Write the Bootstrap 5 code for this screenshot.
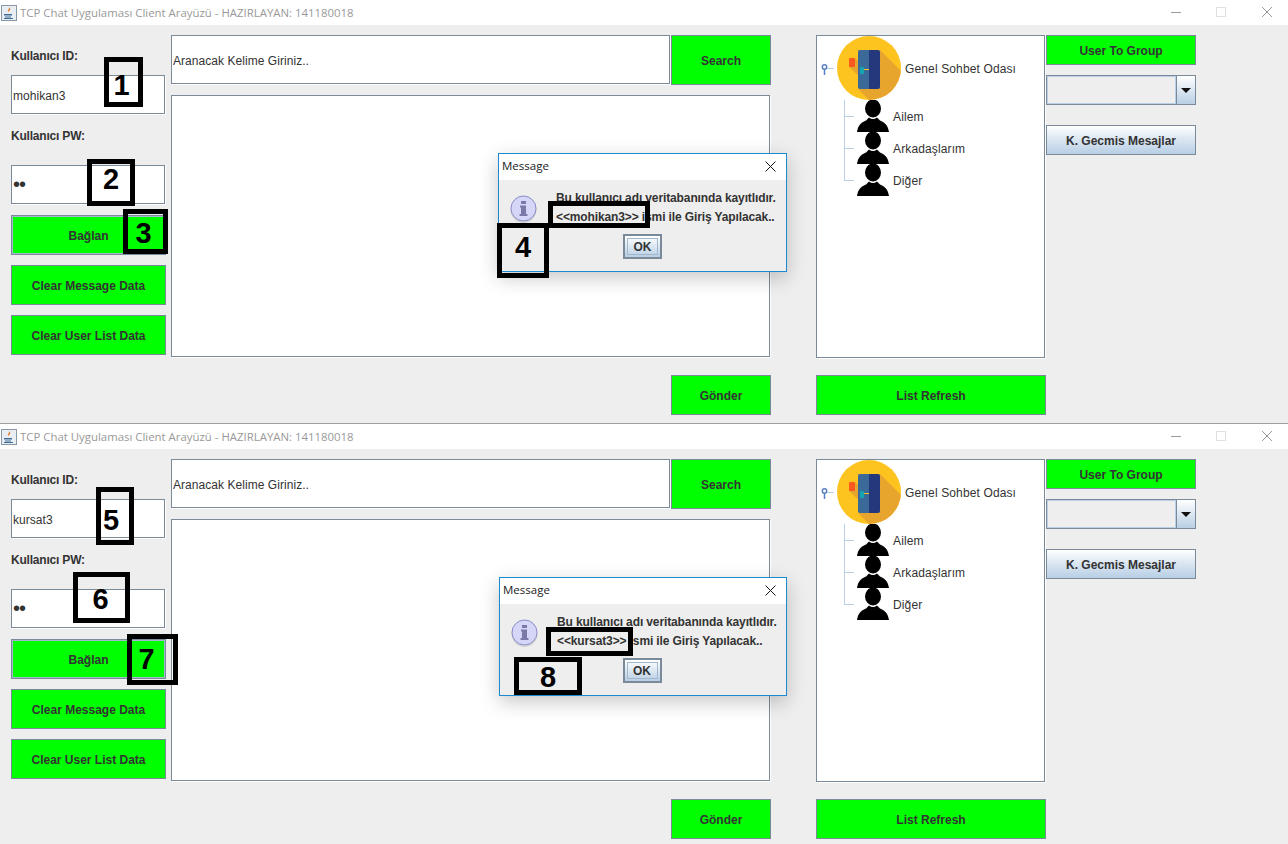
<!DOCTYPE html>
<html lang="tr">
<head>
  <meta charset="UTF-8">
  <meta name="viewport" content="width=device-width, initial-scale=1.0">
  <title>TCP Chat Uygulaması Client Arayüzü</title>
  <link href="https://cdn.jsdelivr.net/npm/bootstrap@5.3.3/dist/css/bootstrap.min.css" rel="stylesheet">
  <style>
    html, body { height: 844px; overflow: hidden; }
    body { background: #eee; color: #333; font: 12px/1.2 "Liberation Sans", Arial, sans-serif; }
    .shot { width: 1288px; height: 844px; position: relative; overflow: hidden; }
    .win { height: 423px; }
    .win + .win { height: 421px; border-top: 1px solid #a0a0a0; }
    .win-title { height: 25px; background: #fff; color: #999; padding-left: 1px; }
    .win-title .caption { margin-left: 3px; font-family: "Open Sans", "Liberation Sans", sans-serif; font-size: 11.4px; }
    .win-ctl { margin-left: auto; margin-right: 5px; }
    .win-ctl svg { display: block; }
    .win-body { padding: 10px 0 0 11px; }
    .col-login { width: 155px; margin-right: 5px; }
    .col-chat { width: 600px; margin-right: 45px; }
    .col-tree { width: 230px; }
    .col-side { width: 150px; }
    .lbl { height: 20px; line-height: 20px; font-weight: 700; color: #333; letter-spacing: -.2px; }
    .lbl-id { margin-top: 11px; margin-bottom: 9px; }
    .lbl-pw { margin-top: 12px; margin-bottom: 19px; }
    .jfield { display: block; width: 154px; height: 39px; padding: 2px 1px 0; border: 1px solid #7a8a99; border-radius: 0; box-shadow: 1px 1px 0 #fff; background: #fff; color: #333; font-size: 12px; letter-spacing: .05px; outline: 0; }
    .jfield[type=password] { font-size: 20px; letter-spacing: -1px; padding-top: 0; }
    .jfield-search { width: 499px; height: 49px; flex: none; }
    .jarea { width: 599px; height: 262px; margin-top: 10px; border: 1px solid #7a8a99; background: #fff; box-shadow: 1px 1px 0 #fff; }
    .jbtn { display: block; padding: 2px 0 0; border: 1px solid #7a8a99; border-radius: 0; background: #0f0; color: #333; font: 700 12px "Liberation Sans", Arial, sans-serif; width: 100%; height: 40px; }
    .jbtn:hover, .jbtn:active { background: #0f0; color: #333; border-color: #7a8a99; }
    .jbtn-focus { margin-top: 11px; box-shadow: inset 0 0 0 1px #a3b8cc; outline: 1px solid #a3b8cc; outline-offset: -2px; }
    .jbtn-gap { margin-top: 10px; }
    .jbtn-search { width: 100px; height: 50px; margin-left: 1px; flex: none; }
    .jbtn-send { width: 100px; margin: 18px 0 0 500px; }
    .jbtn-short { height: 30px; }
    .jbtn-blue { height: 30px; margin-top: 20px; background: linear-gradient(#fff, #dce7f2 45%, #b8cfe5); }
    .jbtn-blue:hover, .jbtn-blue:active { background: linear-gradient(#fff, #dce7f2 45%, #b8cfe5); }
    .tree-box { width: 229px; height: 323px; border: 1px solid #7a8a99; background: #fff; box-shadow: 1px 1px 0 #fff; letter-spacing: .13px; }
    .tree-root { height: 64px; padding-left: 4px; color: #333; }
    .tree-root .room { margin-right: 4px; }
    .tree-kids { margin-left: 27px; }
    .tree-kid { height: 32px; }
    .tree-txt { padding-top: 2px; }
    .tick { width: 13px; background: linear-gradient(#b8cfe5, #b8cfe5) left top / 1px 100% no-repeat, linear-gradient(#b8cfe5, #b8cfe5) left 16px / 10px 1px no-repeat; }
    .tree-kid:last-child .tick { background-size: 1px 17px, 10px 1px; }
    .tree-kid svg { margin-right: 4px; flex: none; }
    .jbtn-refresh { margin-top: 17px; }
    .combo { height: 30px; margin-top: 10px; border: 1px solid #7a8a99; background: #eee; }
    .combo-field { flex: 1; border: 1px solid #b8cfe5; }
    .combo-arrow { width: 19px; border-left: 1px solid #7a8a99; background: linear-gradient(#fff, #dce7f2 50%, #b8cfe5); }
    .msg-dlg { position: absolute; height: 119px; background: #eee; border: 1px solid #1b8ad2; box-shadow: 0 6px 18px rgba(0,0,0,.22); }
    .msg-title { height: 26px; background: #fff; color: #222; padding: 0 10px 2px 3px; font-family: "Open Sans", "Liberation Sans", sans-serif; font-size: 11.5px; }
    .msg-text { padding-left: 19px; padding-top: 1px; font-weight: 700; line-height: 19px; white-space: nowrap; color: #333; letter-spacing: -.12px; }
    .msg-icon { flex: none; margin-top: 7px; margin-left: 11px; }
    .msg-row { height: 54px; padding-top: 8px; }
    .msg-ok { width: 39px; height: 25px; padding: 2px; border: 2px solid #7a8a99; background: linear-gradient(#fff, #dce7f2 50%, #b8cfe5); font-weight: 700; color: #333; }
    .msg-ok span { display: block; height: 100%; line-height: 17px; border: 1px solid #a3b8cc; text-align: center; }
    .mark-box { position: absolute; border: 5px solid #000; color: #000; font: 700 29px "Liberation Sans", Arial, sans-serif; }
  </style>
</head>
<body>
  <div class="shot" id="ekran"></div>

  <script>
    const pencereler = [
      { ad: "mohikan3" },
      { ad: "kursat3" }
    ];

    // dialog ve numara kutulari ekran koordinatinda, resmin uzerinde duruyorlar
    const dialoglar = [
      { x: 498, y: 153, w: 289, okKayma: 0, satir: "<<mohikan3>> ismi ile Giriş Yapılacak.." },
      { x: 499, y: 577, w: 288, okKayma: 2, satir: "<<kursat3>> ismi ile Giriş Yapılacak.." }
    ];

    const kutular = [
      { n: "1", x: 104, y: 57, w: 39, h: 50, dx: -2, dy: 3 },
      { n: "2", x: 87, y: 159, w: 48, h: 47, dx: 0, dy: -3 },
      { n: "3", x: 123, y: 209, w: 45, h: 45, dx: -2, dy: 2 },
      { n: "4", x: 497, y: 223, w: 52, h: 55, dx: 0, dy: -3 },
      { n: "", x: 548, y: 201, w: 102, h: 27, dx: 0, dy: 0 },
      { n: "5", x: 96, y: 487, w: 38, h: 58, dx: -4, dy: 4 },
      { n: "6", x: 73, y: 572, w: 57, h: 51, dx: -1, dy: 2 },
      { n: "7", x: 127, y: 634, w: 51, h: 51, dx: -6, dy: 0 },
      { n: "8", x: 514, y: 657, w: 68, h: 38, dx: 0, dy: 1 },
      { n: "", x: 546, y: 627, w: 87, h: 29, dx: 0, dy: 0 }
    ];

    const kisiIkon = `<svg width="32" height="32" viewBox="0 0 32 32"><ellipse cx="16" cy="8.5" rx="8" ry="9" fill="#000"/><path d="M0 32C1 26 3 23 9 20.500L12 17.500Q16 20.500 20 17.500L23 20.500C29 23 31 26 32 32Z" fill="#000"/></svg>`;

    function odaIkon(i) {
      return `<svg class="room" width="64" height="64" viewBox="0 0 64 64">
        <defs><clipPath id="oda${i}"><circle cx="32" cy="32" r="32"/></clipPath></defs>
        <circle cx="32" cy="32" r="32" fill="#fdc31f"/>
        <g clip-path="url(#oda${i})">
          <path d="M43 14L66 37V66H34L21 53V14Z" fill="#e8a52e"/>
          <path d="M12 31L18 22L24 28V42Z" fill="#e8a52e"/>
        </g>
        <rect x="12" y="22" width="6" height="9" rx="1" fill="#fb5a1e"/>
        <path d="M23 14H32V53H23A2 2 0 0 1 21 51V16A2 2 0 0 1 23 14Z" fill="#3b6a98"/>
        <path d="M32 14H41A2 2 0 0 1 43 16V51A2 2 0 0 1 41 53H32Z" fill="#25387c"/>
        <rect x="23" y="31" width="4" height="7" fill="#16a4b4"/>
        <rect x="27" y="33" width="5" height="1" fill="#fdc31f"/>
      </svg>`;
    }

    function pencere(p, i) {
      return `<section class="win">
        <div class="win-title d-flex align-items-center">
          <svg width="16" height="16" viewBox="0 0 16 16">
            <rect x=".5" y=".5" width="15" height="15" fill="#e8eef4" stroke="#8a98a6"/>
            <path d="M8 2C9 4 6 5 7 7C8 6 10 5 9 3Z" fill="#e8791e"/>
            <path d="M3 9H11V10.500H3ZM4 11.500H10V12.500H4ZM3 13H12V14H3Z" fill="#3f6d96"/>
          </svg>
          <span class="caption">TCP Chat Uygulaması Client Arayüzü - HAZIRLAYAN: 141180018</span>
          <svg class="win-ctl" width="112" height="25" viewBox="0 0 112 25" fill="none">
            <path d="M0 12.500H10" stroke="#999"/>
            <rect x="45.500" y="7.500" width="9" height="9" stroke="#e0e0e0"/>
            <path d="M91 7L101 17M101 7L91 17" stroke="#999"/>
          </svg>
        </div>
        <div class="win-body d-flex align-items-start">
          <div class="col-login">
            <div class="lbl lbl-id">Kullanıcı ID:</div>
            <input class="jfield" type="text" value="${p.ad}" readonly>
            <div class="lbl lbl-pw">Kullanıcı PW:</div>
            <input class="jfield" type="password" value="12" readonly>
            <button class="btn jbtn jbtn-focus">Bağlan</button>
            <button class="btn jbtn jbtn-gap">Clear Message Data</button>
            <button class="btn jbtn jbtn-gap">Clear User List Data</button>
          </div>
          <div class="col-chat">
            <div class="d-flex align-items-start">
              <input class="jfield jfield-search" type="text" value="Aranacak Kelime Giriniz.." readonly>
              <button class="btn jbtn jbtn-search">Search</button>
            </div>
            <div class="jarea"></div>
            <button class="btn jbtn jbtn-send">Gönder</button>
          </div>
          <div class="col-tree">
            <div class="tree-box">
              <div class="tree-root d-flex align-items-center">
                <svg width="16" height="14" viewBox="0 0 16 14" fill="none">
                  <circle cx="3.500" cy="6" r="2.200" stroke="#5b7fc4" stroke-width="1.500"/>
                  <path d="M3.500 8.500V14" stroke="#5b7fc4" stroke-width="1.500"/>
                  <path d="M6 7.500H13" stroke="#b8cfe5"/>
                </svg>
                ${odaIkon(i)}
                <span class="tree-txt">Genel Sohbet Odası</span>
              </div>
              <div class="tree-kids">
                <div class="tree-kid d-flex align-items-stretch"><span class="tick"></span>${kisiIkon}<span class="align-self-center tree-txt">Ailem</span></div>
                <div class="tree-kid d-flex align-items-stretch"><span class="tick"></span>${kisiIkon}<span class="align-self-center tree-txt">Arkadaşlarım</span></div>
                <div class="tree-kid d-flex align-items-stretch"><span class="tick"></span>${kisiIkon}<span class="align-self-center tree-txt">Diğer</span></div>
              </div>
            </div>
            <button class="btn jbtn jbtn-refresh">List Refresh</button>
          </div>
          <div class="col-side">
            <button class="btn jbtn jbtn-short">User To Group</button>
            <div class="combo d-flex">
              <div class="combo-field"></div>
              <div class="combo-arrow d-flex align-items-center justify-content-center">
                <svg width="10" height="5" viewBox="0 0 10 5"><path d="M0 0H10L5 5Z" fill="#111"/></svg>
              </div>
            </div>
            <button class="btn jbtn jbtn-blue">K. Gecmis Mesajlar</button>
          </div>
        </div>
      </section>`;
    }

    function dialog(d) {
      const satir = d.satir.replace(/</g, "&lt;").replace(/>/g, "&gt;");
      return `<div class="msg-dlg" style="left:${d.x}px;top:${d.y}px;width:${d.w}px">
        <div class="msg-title d-flex align-items-center justify-content-between">
          <span>Message</span>
          <svg width="11" height="11" viewBox="0 0 11 11"><path d="M.5 .5L10.500 10.500M10.500 .5L.5 10.500" stroke="#111"/></svg>
        </div>
        <div class="msg-row d-flex">
          <svg class="msg-icon" width="27" height="28" viewBox="0 0 27 28">
            <circle cx="13.500" cy="15" r="13" fill="#aaa" opacity=".35"/>
            <circle cx="13.500" cy="13.500" r="12.500" fill="#d6d6f8" stroke="#8a8ac8"/>
            <rect x="11" y="6" width="5" height="3" fill="#7a7aa8"/>
            <path d="M10 10.500H16V19H17.500V21H9.500V19H11V12.500H10Z" fill="#7a7aa8"/>
          </svg>
          <div class="msg-text">Bu kullanıcı adı veritabanında kayıtlıdır.<br>${satir}</div>
        </div>
        <div class="d-flex justify-content-center">
          <div class="msg-ok" style="margin-right:${d.okKayma}px"><span>OK</span></div>
        </div>
      </div>`;
    }

    function kutu(k) {
      return `<div class="mark-box d-flex align-items-center justify-content-center" style="left:${k.x}px;top:${k.y}px;width:${k.w}px;height:${k.h}px"><span style="transform:translate(${k.dx}px,${k.dy}px)">${k.n}</span></div>`;
    }

    document.getElementById("ekran").innerHTML =
      pencereler.map(pencere).join("") +
      dialoglar.map(dialog).join("") +
      kutular.map(kutu).join("");
  </script>

  <script src="https://cdn.jsdelivr.net/npm/bootstrap@5.3.3/dist/js/bootstrap.bundle.min.js"></script>
</body>
</html>
